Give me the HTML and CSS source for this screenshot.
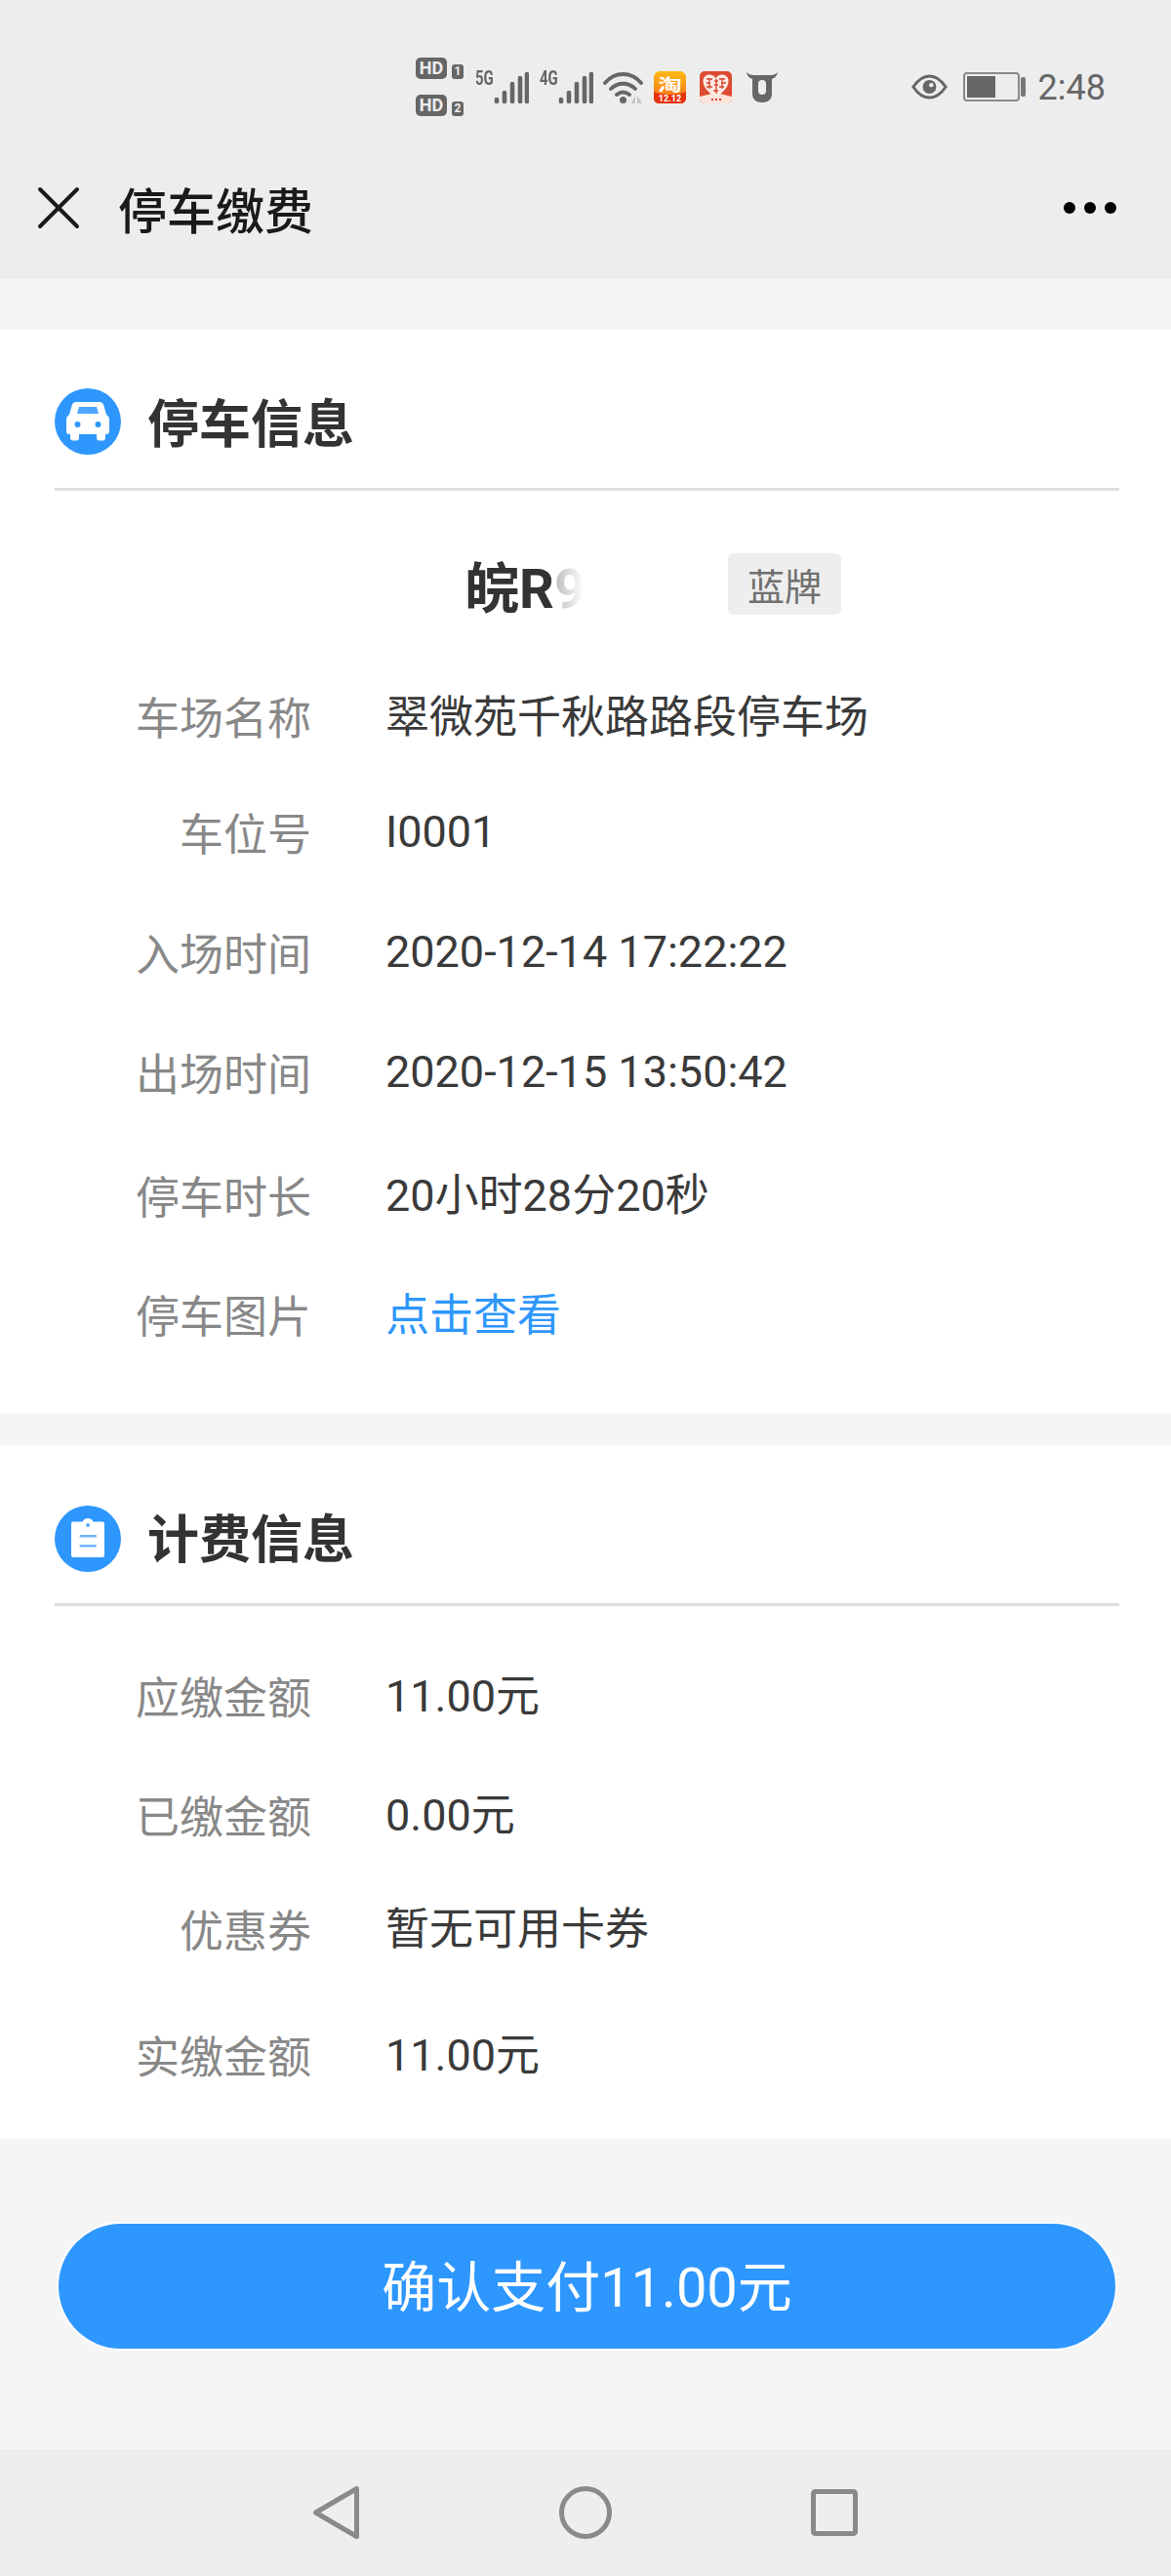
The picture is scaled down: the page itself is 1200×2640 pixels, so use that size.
FILE: index.html
```html
<!DOCTYPE html>
<html lang="zh">
<head>
<meta charset="utf-8">
<title>停车缴费</title>
<link rel="stylesheet" href="styles.css">
</head>
<body>
<div class="app">
  <header class="top">
    <div class="status">
      <div class="hd-col">
        <div class="hd"><span class="hd-box">HD</span><span class="hd-num">1</span></div>
        <div class="hd"><span class="hd-box">HD</span><span class="hd-num">2</span></div>
      </div>
      <div class="net"><span class="net-label">5G</span><svg class="bars" viewBox="0 0 36 33"><path d="M3 31v-2M11 31v-9M19 31V13M27 31V7M34 31V3"/></svg></div>
      <div class="net net-second"><span class="net-label">4G</span><svg class="bars" viewBox="0 0 36 33"><path d="M3 31v-2M11 31v-9M19 31V13M27 31V7M34 31V3"/></svg></div>
      <svg class="wifi" viewBox="0 0 42 33"><path class="wifi-arc" d="M2 12C12 0 29 0 39 12M8 18c7-7 18-7 25 0M14 24c4-3 9-3 13 0"/><circle class="wifi-dot" cx="20.500" cy="29.500" r="3.500"/><path class="wifi-arrow" d="M29 33l4-8v8zM35 25l5 8h-5z"/></svg>
      <svg class="app-ic ic-tao" viewBox="0 0 33 33"><defs><linearGradient id="tb" x1="0" y1="0" x2="0" y2="1"><stop offset="0" stop-color="#fdb914"/><stop offset=".7" stop-color="#f9811b"/><stop offset="1" stop-color="#e9300f"/></linearGradient></defs><rect width="33" height="33" rx="6" fill="url(#tb)"/><path d="M0 21c8 4 25 4 33 0v7c0 3-3 5-5 5H5c-2 0-5-2-5-5z" fill="#e5320f"/><text class="tao" transform="translate(16.500 19.500) scale(1.550 1.050)">淘</text><text x="16.500" y="31" class="tao-d">12.12</text></svg>
      <svg class="app-ic ic-heart" viewBox="0 0 33 33"><rect width="33" height="33" rx="5" fill="#dd4a30"/><path d="M0 26l16.500-4L33 26v2c0 3-2 5-5 5H5c-3 0-5-2-5-5z" fill="#fbe3da"/><path d="M16.500 27C8 21 3.500 16 3.500 10c0-4 3-6.500 6.500-6.500 3 0 5.500 1.500 6.500 4 1-2.500 3.500-4 6.500-4 3.500 0 6.500 2.500 6.500 6.500 0 6-4.500 11-13 17z" fill="#fbe9e3"/><path d="M7 8h6M7 12h4M7 16h6M10 7v11M14 20h5M15 10h4M15 14h4M17 8v15M20 8h6M22 12h5M20 16h5M23 7v11" fill="none" stroke="#d5452f" stroke-width="1.300"/><path d="M12 29h2M16 29h2M20 29h2" fill="none" stroke="#d5452f" stroke-width="2"/></svg>
      <svg class="cow" viewBox="0 0 32 32"><path d="M0 1c1 4 3 6 6 7v15c0 6 4 9 10 9s10-3 10-9V8c3-1 5-3 6-7-2 2-4 3-7 3H7C4 4 2 3 0 1z" fill="#666"/><rect x="12" y="9" width="8" height="15" rx="4" fill="#eee"/></svg>
      <div class="status-right">
        <svg class="eye" viewBox="0 0 40 30"><path d="M2 15C8 6 14 3 20 3s12 3 18 12c-6 9-12 12-18 12S8 24 2 15z" fill="none" stroke="#666" stroke-width="3.200"/><circle cx="20" cy="15" r="7.500" fill="#666"/><circle cx="22" cy="13" r="2.400" fill="#eee"/></svg>
        <div class="battery"><div class="battery-body"><div class="battery-fill"></div></div><div class="battery-cap"></div></div>
        <span class="clock">2:48</span>
      </div>
    </div>
    <div class="nav">
      <svg class="close" viewBox="0 0 44 44"><path d="M3 3l38 38M41 3L3 41"/></svg>
      <h1 class="nav-title">停车缴费</h1>
      <div class="more"><i></i><i></i><i></i></div>
    </div>
  </header>

  <main class="content">
    <section class="card card-park">
      <div class="head">
        <svg class="head-ic" viewBox="0 0 68 68"><circle cx="34" cy="34" r="34" fill="#2e97fd"/><path d="M22 14h24c2 0 3.500 1 4.200 3L53 27c2 1 3 3 3 5v12c0 2-1 3-3 3h-1v4c0 1.500-1 2.500-2.500 2.500h-4c-1.500 0-2.500-1-2.500-2.500v-4H25v4c0 1.500-1 2.500-2.500 2.500h-4c-1.500 0-2.500-1-2.500-2.500v-4h-1c-2 0-3-1-3-3V32c0-2 1-4 3-5l2.800-10c.7-2 2.200-3 4.200-3z" fill="#fff"/><path d="M25 19h18l2 7H23z" fill="#4fa6fd"/><circle cx="23.500" cy="37" r="3" fill="#2e97fd"/><circle cx="44.500" cy="37" r="3" fill="#2e97fd"/></svg>
        <h2 class="head-title">停车信息</h2>
      </div>
      <div class="plate-row">
        <span class="plate">皖R<span class="plate-fade">9</span></span>
        <span class="tag">蓝牌</span>
      </div>
      <dl class="rows">
        <div class="row"><dt>车场名称</dt><dd class="cjk">翠微苑千秋路路段停车场</dd></div>
        <div class="row r-b"><dt>车位号</dt><dd>I0001</dd></div>
        <div class="row r-c"><dt>入场时间</dt><dd>2020-12-14 17:22:22</dd></div>
        <div class="row r-d"><dt>出场时间</dt><dd>2020-12-15 13:50:42</dd></div>
        <div class="row r-e"><dt>停车时长</dt><dd class="mixed">20小时28分20秒</dd></div>
        <div class="row r-f"><dt>停车图片</dt><dd class="link cjk">点击查看</dd></div>
      </dl>
    </section>

    <section class="card card-fee">
      <div class="head">
        <svg class="head-ic" viewBox="0 0 68 68"><circle cx="34" cy="34" r="34" fill="#2e97fd"/><path d="M19 16.500h9.500c1-2 3-3.500 5.500-3.500s4.500 1.500 5.500 3.500H49c1.100 0 2 .9 2 2V51c0 1.100-.9 2-2 2H19c-1.100 0-2-.9-2-2V18.500c0-1.100.9-2 2-2z" fill="#fff"/><circle cx="34" cy="20" r="2" fill="#5aabfc"/><rect x="25.500" y="30" width="17.500" height="2.500" rx="1" fill="#6fb5fb"/><rect x="25.500" y="40" width="17.500" height="2.500" rx="1" fill="#6fb5fb"/></svg>
        <h2 class="head-title">计费信息</h2>
      </div>
      <dl class="rows">
        <div class="row f-a"><dt>应缴金额</dt><dd class="mixed">11.00元</dd></div>
        <div class="row f-b"><dt>已缴金额</dt><dd class="mixed">0.00元</dd></div>
        <div class="row f-c"><dt>优惠券</dt><dd class="mixed">暂无可用卡券</dd></div>
        <div class="row f-d"><dt>实缴金额</dt><dd class="mixed">11.00元</dd></div>
      </dl>
    </section>

    <div class="pay-area"><button class="pay" type="button">确认支付11.00元</button></div>
  </main>

  <footer class="sysnav">
    <svg class="sys-back" viewBox="0 0 47 54"><path d="M44.500 2.500v49L2.500 27z"/></svg>
    <svg class="sys-home" viewBox="0 0 54 54"><circle cx="27" cy="27" r="24.500"/></svg>
    <svg class="sys-recent" viewBox="0 0 48 48"><rect x="2.500" y="2.500" width="43" height="43" rx="2"/></svg>
  </footer>
</div>
</body>
</html>
```
FILE: styles.css
```css
* { box-sizing: border-box; }
html, body { margin: 0; padding: 0; }
body { font-family: "Noto Sans CJK SC", "Roboto", sans-serif; background: #f5f5f5; }
.app { width: 1200px; height: 2640px; display: flex; flex-direction: column; overflow: hidden; }

.top { height: 286px; background: #ededed; display: flex; flex-direction: column; }
.status { height: 124px; display: flex; align-items: center; padding: 54px 67px 0 426px; color: #666; flex: none; }
.hd-col { display: flex; flex-direction: column; gap: 16px; width: 61px; flex: none; }
.hd { display: flex; align-items: flex-end; gap: 5px; }
.hd-box { width: 32px; height: 22px; background: #666; color: #eee; border-radius: 5px; font: 700 18px/22px "Roboto", sans-serif; text-align: center; }
.hd-num { width: 12px; height: 15px; background: #666; color: #eee; border-radius: 3px; font: 700 12px/15px "Roboto", sans-serif; text-align: center; }
.net { display: flex; width: 55px; height: 33px; flex: none; }
.net-second { margin-left: 11px; }
.net-label { font: 700 20px/15px "Roboto", sans-serif; width: 19px; flex: none; transform: scaleX(.75); transform-origin: left top; color: #666; }
.bars { width: 36px; height: 33px; fill: none; stroke: #666; stroke-width: 4.600; stroke-linecap: round; }
.wifi { width: 42px; height: 33px; margin-left: 10px; flex: none; }
.wifi-arc { fill: none; stroke: #666; stroke-width: 3.800; stroke-linecap: round; }
.wifi-dot { fill: #666; }
.wifi-arrow { fill: #c4c4c4; }
.app-ic { width: 33px; height: 33px; flex: none; }
.ic-tao { margin-left: 10px; }
.ic-heart { margin-left: 14px; }
.tao { font: 700 16px "Noto Sans CJK SC", sans-serif; fill: #fff; text-anchor: middle; }
.tao-d { font: 700 9px "Roboto", sans-serif; fill: #fff; text-anchor: middle; }
.cow { width: 32px; height: 32px; margin-left: 15px; flex: none; }
.status-right { margin-left: auto; display: flex; align-items: center; }
.eye { width: 37px; height: 28px; }
.battery { display: flex; align-items: center; margin-left: 16px; gap: 1px; }
.battery-body { width: 58px; height: 30px; border: 2px solid #8a8a8a; border-radius: 4px; padding: 2px; }
.battery-fill { width: 29px; height: 100%; background: #666; }
.battery-cap { width: 5px; height: 20px; background: #777; border-radius: 2px; }
.clock { font: 400 36px/1 "Roboto", sans-serif; color: #666; margin-left: 13px; padding-top: 1px; }

.nav { flex: 1; display: flex; align-items: center; padding: 16px 56px 0 38px; }
.close { width: 44px; height: 44px; fill: none; stroke: #1a1a1a; stroke-width: 4; stroke-linecap: round; }
.nav-title { margin: 0 0 0 39px; font-size: 50px; line-height: 60px; font-weight: 500; color: #1a1a1a; }
.more { margin-left: auto; display: flex; gap: 9px; }
.more i { width: 12px; height: 12px; border-radius: 50%; background: #000; display: block; }

.content { flex: 1; display: flex; flex-direction: column; padding-top: 52px; }
.card { background: #fff; padding: 0 53px 0 56px; }
.card-park { height: 1110px; }
.card-fee { margin-top: 33px; height: 711px; }
.head { height: 165px; display: flex; align-items: center; gap: 27px; border-bottom: 3px solid #dedede; padding: 60px 0 34px; }
.card-fee .head { padding: 62px 0 32px; }
.head-ic { width: 68px; height: 68px; flex: none; }
.head-title { margin: 0; padding-bottom: 3px; font-size: 53px; line-height: 60px; font-weight: 700; color: #333; }
.card-fee .head-title { padding-bottom: 6px; }

.plate-row { height: 201px; display: flex; align-items: center; padding-left: 420px; }
.plate { font: 700 56px/1 "Roboto", "Noto Sans CJK SC", sans-serif; color: #333; width: 270px; flex: none; }
.plate-fade { background: linear-gradient(90deg, #bbb 0%, #fff 95%); -webkit-background-clip: text; background-clip: text; color: transparent; }
.tag { background: #eeeeee; color: #707070; font-size: 38px; line-height: 63px; height: 63px; width: 116px; text-align: center; border-radius: 6px; margin-bottom: 10px; flex: none; }

.rows { margin: 0; }
.row { display: flex; align-items: center; height: 60px; }
.row dt { width: 263px; text-align: right; color: #888; font-size: 45px; line-height: 60px; flex: none; }
.row dd { margin: 0 0 0 76px; color: #3a3a3a; font-size: 45px; line-height: 60px; font-family: "Roboto", "Noto Sans CJK SC", sans-serif; }
.row dd.cjk { padding-top: 4px; }
.row dd.mixed { padding-top: 2px; }
.row dd.link { color: #2e97fd; }
.r-b { margin-top: 59px; }
.r-c { margin-top: 63px; }
.r-d { margin-top: 63px; }
.r-e { margin-top: 66px; }
.r-f { margin-top: 62px; }
.f-a { margin-top: 62px; }
.f-b { margin-top: 62px; }
.f-c { margin-top: 57px; }
.f-d { margin-top: 69px; }

.pay-area { flex: 1; padding: 87px 57px 0 60px; }
.pay { width: 100%; height: 128px; border: 0; border-radius: 64px; background: #2e97fe; box-shadow: 0 0 0 2px #fdfdfd; color: #fff; font-size: 56px; font-family: "Roboto", "Noto Sans CJK SC", sans-serif; padding: 0 0 8px; }

.sysnav { height: 130px; background: #eeeeee; display: flex; align-items: center; padding-left: 321px; flex: none; }
.sysnav svg { fill: none; stroke: #8a8a8a; stroke-width: 5; stroke-linejoin: round; flex: none; }
.sys-back { width: 47px; height: 54px; }
.sys-home { width: 54px; height: 54px; margin-left: 205px; }
.sys-recent { width: 48px; height: 48px; margin-left: 204px; }
```
